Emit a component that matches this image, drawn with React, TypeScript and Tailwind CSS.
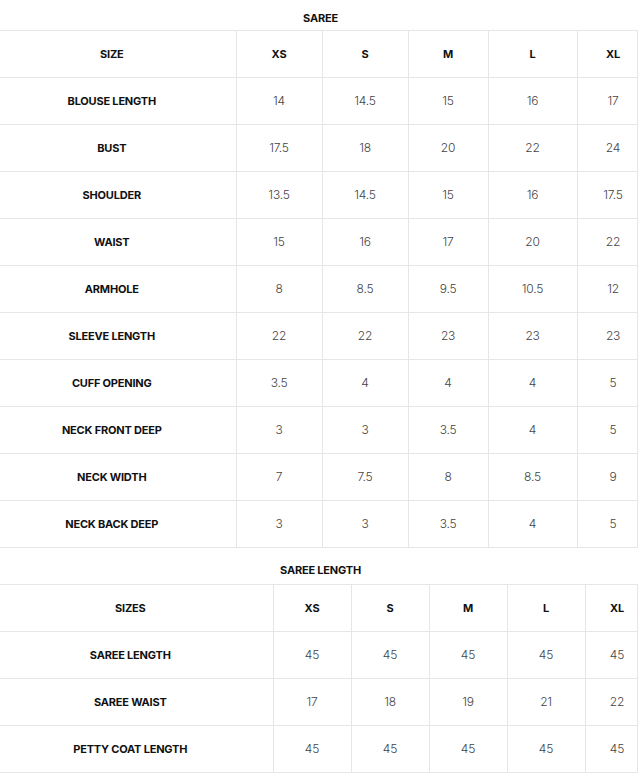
import React from 'react';

const sareeRows: [string, string[]][] = [
  ['BLOUSE LENGTH', ['14', '14.5', '15', '16', '17']],
  ['BUST', ['17.5', '18', '20', '22', '24']],
  ['SHOULDER', ['13.5', '14.5', '15', '16', '17.5']],
  ['WAIST', ['15', '16', '17', '20', '22']],
  ['ARMHOLE', ['8', '8.5', '9.5', '10.5', '12']],
  ['SLEEVE LENGTH', ['22', '22', '23', '23', '23']],
  ['CUFF OPENING', ['3.5', '4', '4', '4', '5']],
  ['NECK FRONT DEEP', ['3', '3', '3.5', '4', '5']],
  ['NECK WIDTH', ['7', '7.5', '8', '8.5', '9']],
  ['NECK BACK DEEP', ['3', '3', '3.5', '4', '5']],
];

const lengthRows: [string, string[]][] = [
  ['SAREE LENGTH', ['45', '45', '45', '45', '45']],
  ['SAREE WAIST', ['17', '18', '19', '21', '22']],
  ['PETTY COAT LENGTH', ['45', '45', '45', '45', '45']],
];

const sizes = ['XS', 'S', 'M', 'L', 'XL'];

type TableProps = {
  label: string;
  rows: [string, string[]][];
  widths: number[];
};

const cellCls = (i: number) =>
  i === 0 ? 'pr-3' : i === 5 ? 'pl-3' : '';

const SizeTable: React.FC<TableProps> = ({ label, rows, widths }) => {
  return (
    <table className="table-fixed border-collapse w-[637px]">
      <colgroup>
        {widths.map((w, i) => (
          <col key={i} style={{ width: w }} />
        ))}
      </colgroup>
      <tbody>
        <tr className="h-[47px] border-y border-[#e6e6e6]">
          <td className="pr-3 text-center text-[11px] font-bold text-[#111] border-r border-[#e6e6e6]">{label}</td>
          {sizes.map((s, i) => (
            <td
              key={s}
              className={`${cellCls(i + 1)} text-center text-[11px] font-bold text-[#111] border-r border-[#e6e6e6]`}
            >
              {s}
            </td>
          ))}
        </tr>
        {rows.map(([name, vals]) => (
          <tr key={name} className="h-[47px] border-y border-[#e6e6e6]">
            <td className="pr-3 text-center text-[11px] font-bold text-[#111] border-r border-[#e6e6e6]">{name}</td>
            {vals.map((v, i) => (
              <td
                key={i}
                className={`${cellCls(i + 1)} text-center text-[12px] font-light text-[#444] border-r border-[#e6e6e6]`}
              >
                {v}
              </td>
            ))}
          </tr>
        ))}
      </tbody>
    </table>
  );
};

const App: React.FC = () => {
  return (
    <div className="w-[641px] bg-white font-['Inter',sans-serif] tracking-[-0.2px]">
      <h2 className="h-[30px] pt-[10px] text-center text-[11px] font-bold text-[#111]">SAREE</h2>
      <SizeTable label="SIZE" rows={sareeRows} widths={[236, 86, 86, 80, 89, 60]} />
      <h2 className="h-[36px] pt-[14px] text-center text-[11px] font-bold text-[#111]">SAREE LENGTH</h2>
      <SizeTable label="SIZES" rows={lengthRows} widths={[273, 78, 78, 78, 78, 52]} />
    </div>
  );
};

export default App;
